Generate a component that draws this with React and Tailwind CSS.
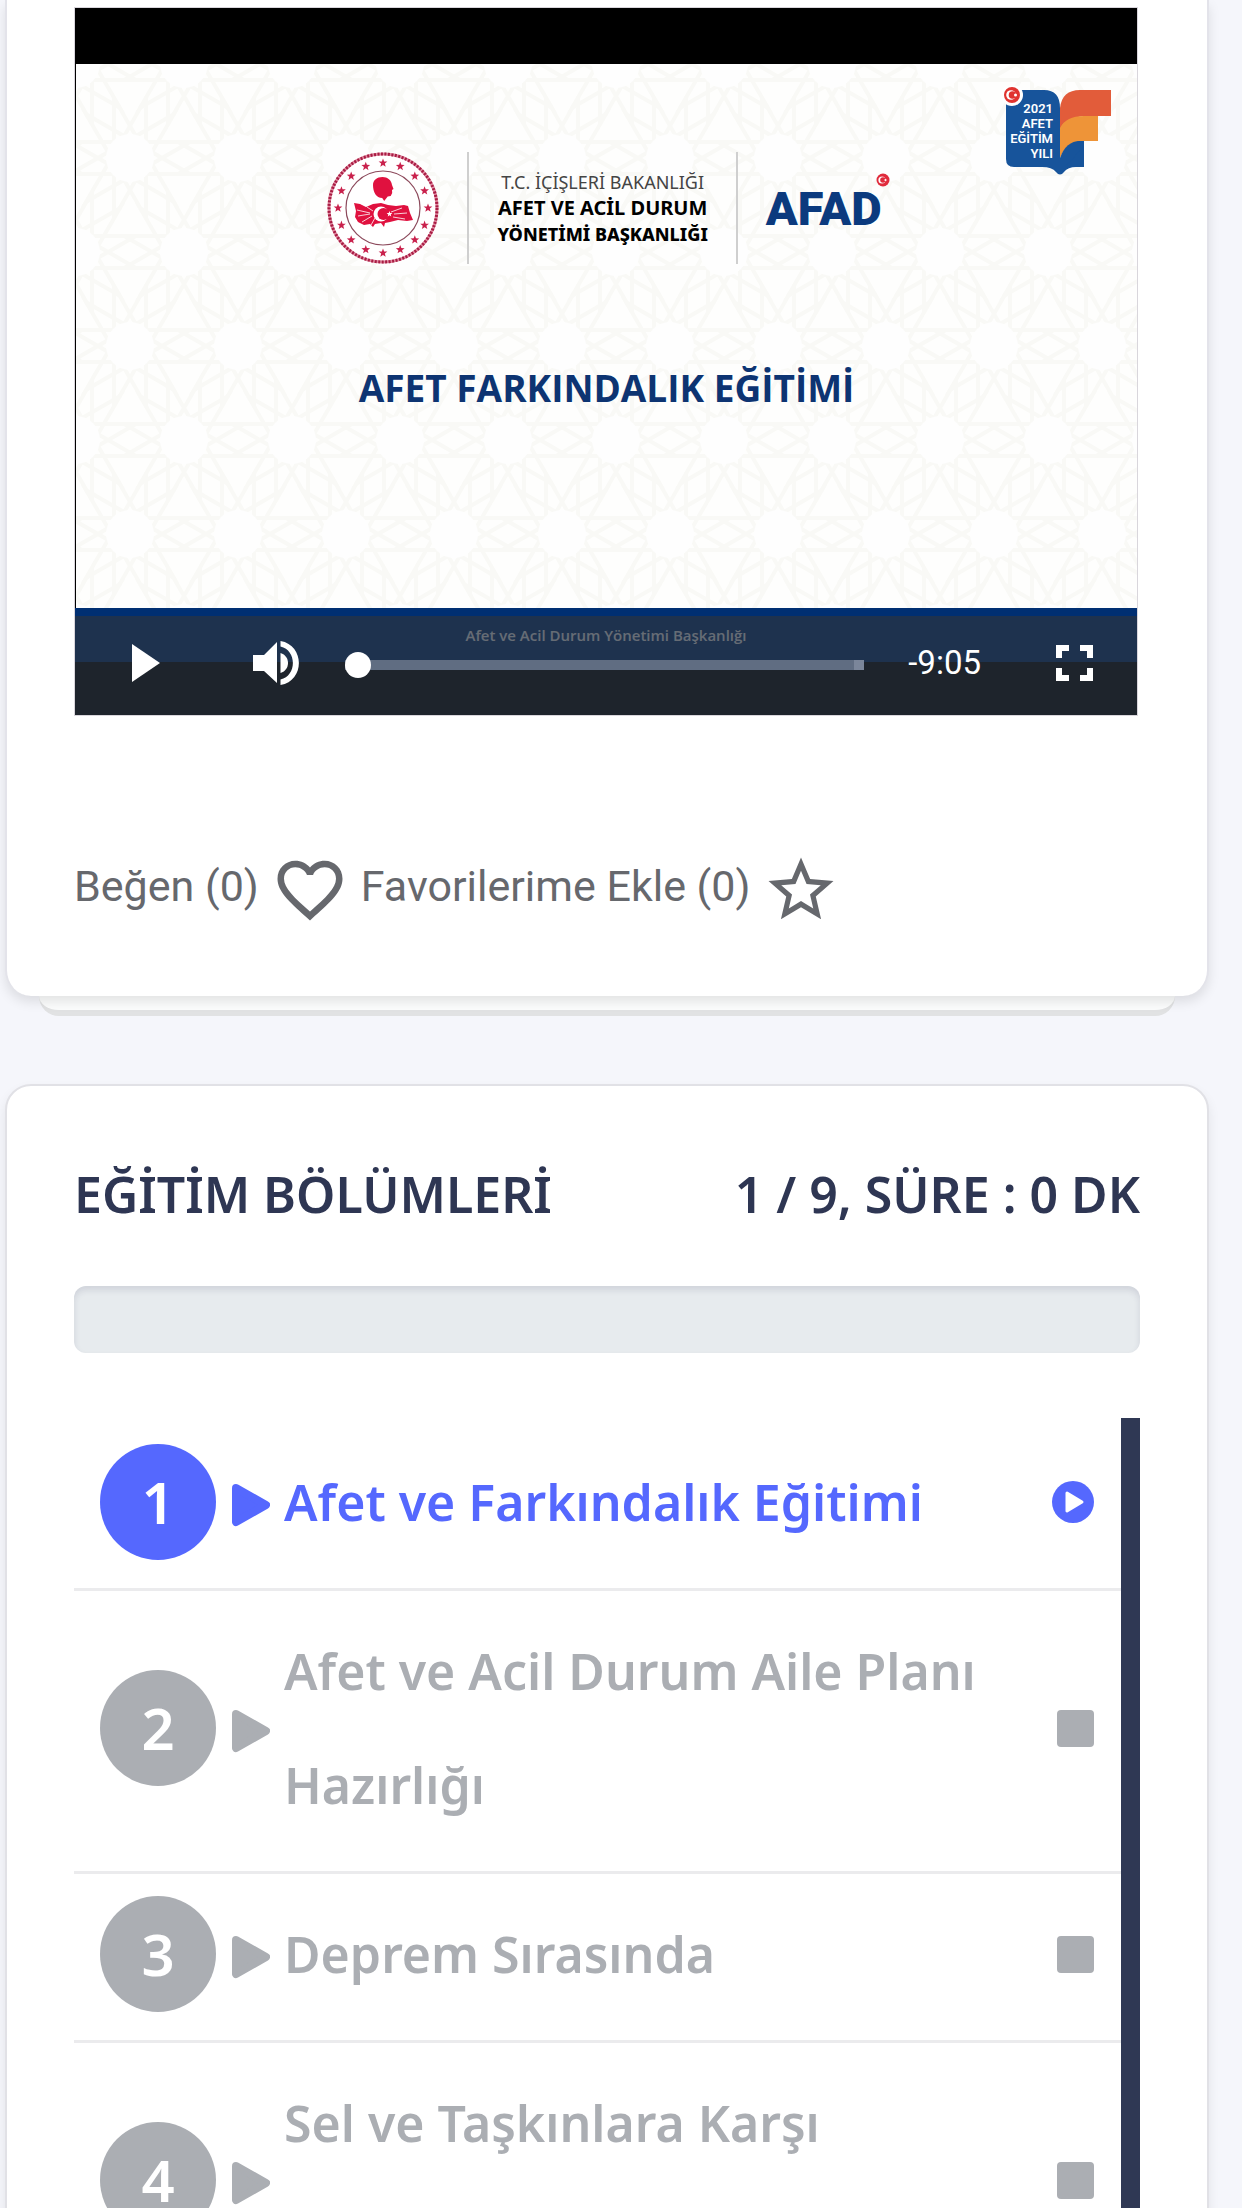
import React, { useState } from "react";
import { MdFavoriteBorder, MdStarBorder } from "react-icons/md";

const lessons = [
  { id: 1, title: "Afet ve Farkındalık Eğitimi" },
  { id: 2, title: "Afet ve Acil Durum Aile Planı Hazırlığı" },
  { id: 3, title: "Deprem Sırasında" },
  { id: 4, title: "Sel ve Taşkınlara Karşı", tall: true },
];

const polar = (cx, cy, r, deg) => {
  const a = ((deg - 90) * Math.PI) / 180;
  return [cx + r * Math.cos(a), cy + r * Math.sin(a)];
};

const starPoints = (cx, cy, r) =>
  Array.from({ length: 10 }, (_, i) => polar(cx, cy, i % 2 ? r * 0.42 : r, i * 36).join(",")).join(" ");

// closed line that joins every fifth corner of a regular twelve sided shape
const rosette = (cx, cy, r) =>
  Array.from({ length: 12 }, (_, i) => polar(cx, cy, r, i * 150 + 15).join(",")).join(" ");

const SlidePattern = () => (
  <svg className="absolute inset-0 w-full h-full" aria-hidden="true">
    <defs>
      <pattern id="girih" width="108" height="188" patternUnits="userSpaceOnUse">
        <g fill="none" stroke="#f9f9f6" strokeWidth="4">
          {[[0, 0], [108, 0], [54, 94], [0, 188], [108, 188], [-54, 94], [162, 94]].map(([x, y]) => (
            <polygon key={x + "-" + y} points={rosette(x, y, 62)} />
          ))}
        </g>
        <g fill="#fefefe">
          {[[0, 0], [108, 0], [54, 94], [0, 188], [108, 188]].map(([x, y]) => (
            <circle key={x + "-" + y} cx={x} cy={y} r="24" />
          ))}
        </g>
      </pattern>
    </defs>
    <rect width="100%" height="100%" fill="url(#girih)" />
  </svg>
);

const Emblem = () => (
  <svg viewBox="0 0 112 112" className="w-28 h-28" role="img" aria-label="İçişleri Bakanlığı">
    <circle cx="56" cy="56" r="55" fill="#fff" />
    <circle cx="56" cy="56" r="54" fill="none" stroke="#e0899f" strokeWidth="3" />
    <circle cx="56" cy="56" r="54" fill="none" stroke="#a81c44" strokeWidth="3" strokeDasharray="2 1.5" />
    <circle cx="56" cy="56" r="37" fill="none" stroke="#8c4a5c" strokeWidth="1.2" />
    {Array.from({ length: 16 }, (_, i) => {
      const [x, y] = polar(56, 56, 45, i * 22.5);
      return <polygon key={i} points={starPoints(x, y, 4.6)} fill="#c9214c" />;
    })}
    <path d="M46 33c0-5 4-8 9.500-8 5 0 9 3 9.500 8l1.500 4-1.500 1 .2 3-1.500 3-3 .5-3.500 4.500-2-3c-6 0-9.200-6-9.200-13z" fill="#e0113f" />
    <path d="M27 51l6 1 6 3 7-3 8-1 7 2 8 1 8-1 4 1 2 7 3 7-6 1-9-1-8 2-5 1-1 4-3-4-6 1-2 3-3-3-6 1-6-3-3-5 1-6z" fill="#e0113f" />
    <path d="M30 58l13 3M31 64l12-2M35 70l10-6M44 73l4-7M40 55l6 4M75 56l-11 4M80 61l-13 1M78 67l-12-2" stroke="#fff" strokeWidth="0.8" />
    <circle cx="54" cy="62" r="7.500" fill="#fff" />
    <circle cx="56.500" cy="62" r="6" fill="#e0113f" />
    <polygon points={starPoints(62.5, 62, 3)} fill="#fff" />
  </svg>
);

const AfadLogo = () => (
  <div className="relative">
    <span className="block font-[Roboto,sans-serif] font-black text-[47px] leading-[47px] text-[#0b3a7e]">AFAD</span>
    <svg viewBox="0 0 14 14" className="absolute -right-2 -top-3 w-3.5 h-3.5" aria-hidden="true">
      <circle cx="7" cy="7" r="6.500" fill="#e02b3c" />
      <circle cx="6" cy="7" r="3.600" fill="#fff" />
      <circle cx="7" cy="7" r="2.800" fill="#e02b3c" />
      <circle cx="9.500" cy="7" r="1.100" fill="#fff" />
    </svg>
  </div>
);

const YearBadge = () => (
  <svg viewBox="0 0 112 92" className="absolute top-[22px] right-[25px] w-28 h-[92px]" role="img" aria-label="2021 Afet Eğitim Yılı">
    <path d="M6 4H44Q60 4 60 22V74L78 54H84V81H76Q68 81 64 86Q60 91 56 86Q52 81 42 81H14Q6 81 6 73Z" fill="#17549b" />
    <path d="M60 22Q62 4 80 4H111V30H84Q64 32 60 44Z" fill="#e25c3a" />
    <path d="M60 42Q66 30 84 30H98V55H80Q66 57 60 72Z" fill="#ee9438" />
    <path d="M60 72Q66 55 80 55H84V60L66 80H60Z" fill="#17549b" />
    <circle cx="12" cy="9" r="11" fill="#fff" />
    <circle cx="12" cy="9" r="8" fill="#e0332f" />
    <circle cx="11" cy="9" r="4.800" fill="#fff" />
    <circle cx="12.500" cy="9" r="3.800" fill="#e0332f" />
    <circle cx="15.500" cy="9" r="1.500" fill="#fff" />
    <g fill="#fff" textAnchor="end" fontFamily="Roboto, sans-serif" fontWeight="600" fontSize="13">
      <text x="53" y="27">2021</text>
      <text x="53" y="42">AFET</text>
      <text x="53" y="57">EĞİTİM</text>
      <text x="53" y="72">YILI</text>
    </g>
  </svg>
);

const PlayIcon = () => (
  <svg viewBox="0 0 28 38" className="w-7 h-[38px]" fill="#fff">
    <path d="M0 0L28 19L0 38Z" />
  </svg>
);

const VolumeIcon = () => (
  <svg viewBox="0 0 46 46" className="w-[46px] h-[46px]" fill="#fff">
    <path d="M0 15H11L24 2V43L11 31H0Z" />
    <path d="M27.500 13C37.500 16 37.500 30 27.500 33Z" />
    <path d="M27.500 1C52 5 52 41 27.500 45V39.500C44 36 44 10 27.500 6.500Z" />
  </svg>
);

const FullscreenIcon = () => (
  <svg viewBox="0 0 37 36" className="w-[37px] h-9" fill="none" stroke="#fff" strokeWidth="6">
    <path d="M3 13V3H13M24 3H34V13M34 23V33H24M13 33H3V23" />
  </svg>
);

const TriangleIcon = () => (
  <svg viewBox="0 0 38 44" className="w-[38px] h-11 shrink-0" fill="currentColor" stroke="currentColor" strokeWidth="8" strokeLinejoin="round" aria-hidden="true">
    <path d="M4 5L34 22L4 39Z" />
  </svg>
);

const PlayCircleIcon = () => (
  <svg viewBox="0 0 42 42" className="w-[42px] h-[42px] shrink-0" aria-hidden="true">
    <circle cx="21" cy="21" r="21" fill="currentColor" />
    <path d="M15 12L30 21L15 30Z" fill="#fff" stroke="#fff" strokeWidth="3" strokeLinejoin="round" />
  </svg>
);

const VideoPlayer = () => {
  const [time, setTime] = useState(0);

  return (
    <div className="relative mr-0.5 border border-[#d9d6dc] bg-black pt-14 pb-[53px]">
      <div className="relative h-[544px] bg-[#fefefd] ml-px pt-[88px] overflow-hidden">
        <SlidePattern />
        <div className="relative flex justify-center gap-7 pr-1">
          <Emblem />
          <div className="w-0.5 bg-[#cfcfcf]" />
          <div className="flex flex-col justify-center items-center font-['Noto_Sans',sans-serif] leading-[26px] whitespace-nowrap text-black">
            <span className="text-[18px] text-[#444]">T.C. İÇİŞLERİ BAKANLIĞI</span>
            <span className="text-[20px] font-bold">AFET VE ACİL DURUM</span>
            <span className="text-[18px] font-extrabold">YÖNETİMİ BAŞKANLIĞI</span>
          </div>
          <div className="w-0.5 bg-[#cfcfcf]" />
          <div className="flex items-center">
            <AfadLogo />
          </div>
        </div>
        <h2 className="relative mt-[100px] text-center font-['Open_Sans',sans-serif] font-bold text-[37px] leading-12 text-[#0d3472]">
          AFET FARKINDALIK EĞİTİMİ
        </h2>
        <YearBadge />
      </div>
      <div className="h-[54px] bg-[#002f72] flex items-center justify-center font-['Open_Sans',sans-serif] font-semibold text-[15px] text-[#f0f2f4]">
        Afet ve Acil Durum Yönetimi Başkanlığı
      </div>

      <div className="absolute inset-x-0 bottom-0 h-[99px] bg-[#2b333f]/70 flex items-center pl-[57px] pr-11 pb-1.5">
        <button aria-label="Oynat">
          <PlayIcon />
        </button>
        <button aria-label="Ses" className="ml-[93px]">
          <VolumeIcon />
        </button>
        <input
          type="range"
          aria-label="İlerleme"
          min="0"
          max="545"
          value={time}
          onChange={(e) => setTime(Number(e.target.value))}
          className="appearance-none flex-1 min-w-0 h-2.5 mt-1 ml-[46px] bg-transparent bg-linear-to-r from-[#606d82] from-98% to-[#7b869a] to-98% bg-no-repeat [&::-webkit-slider-thumb]:appearance-none [&::-webkit-slider-thumb]:w-[26px] [&::-webkit-slider-thumb]:h-[26px] [&::-webkit-slider-thumb]:rounded-full [&::-webkit-slider-thumb]:bg-white"
        />
        <span className="ml-11 font-[Roboto,sans-serif] text-[33px] text-white">-9:05</span>
        <button aria-label="Tam ekran" className="ml-[75px]">
          <FullscreenIcon />
        </button>
      </div>
    </div>
  );
};

const LessonRow = ({ lesson, active, onSelect }) => (
  <li className="border-b-3 border-[#ebebed]">
    <button
      onClick={() => onSelect(lesson.id)}
      className={`w-full flex items-center text-left pt-[23px] pb-[29px] pl-[26px] pr-[27px] ${active ? "text-[#5568fe]" : "text-[#abaeb3]"}`}
    >
      <span className="w-[116px] h-[116px] -my-px shrink-0 rounded-full bg-current flex items-center justify-center">
        <span className="text-white text-[58px] leading-[58px] font-semibold">{lesson.id}</span>
      </span>
      <span className="ml-4 mt-1.5">
        <TriangleIcon />
      </span>
      <span className={`ml-3.5 mr-8 flex-1 text-[50px] leading-[114px] font-semibold ${lesson.tall ? "min-h-[228px]" : ""}`}>
        {lesson.title}
      </span>
      {active ? <PlayCircleIcon /> : <span className="w-[37px] h-[37px] shrink-0 rounded-[4px] bg-current" />}
    </button>
  </li>
);

const App = () => {
  const [current, setCurrent] = useState(1);

  return (
    <div className="h-screen overflow-hidden bg-[#f5f6fb] pl-[5px] pr-[33px]">
      <div className="relative z-10 bg-white border-x-2 border-[#e3e3ea] rounded-b-[26px] shadow-[0_6px_12px_rgba(0,0,0,0.1)] px-[67px] pt-[7px] pb-[67px]">
        <VideoPlayer />
        <div className="flex items-start gap-3 mt-[135px] font-[Roboto,sans-serif] text-[43px] leading-[70px] text-[#66686d]">
          <button className="flex items-start gap-3">
            Beğen (0)
            <MdFavoriteBorder size={78} />
          </button>
          <button className="flex items-start gap-3">
            Favorilerime Ekle (0)
            <MdStarBorder size={78} />
          </button>
        </div>
      </div>
      <div className="mx-[34px] h-5 bg-[#fcfdfd] border-b-6 border-[#e1e2e3] rounded-b-[20px]" />

      <div className="mt-[68px] bg-white border-2 border-[#e1e1e6] rounded-[26px] shadow-[0_6px_12px_rgba(0,0,0,0.08)] px-[67px] pb-16 font-['Noto_Sans',sans-serif]">
        <div className="flex justify-between pt-[76px] text-[50px] leading-16 font-semibold text-[#2e3653] whitespace-nowrap">
          <h3>EĞİTİM BÖLÜMLERİ</h3>
          <span>1 / 9, SÜRE : 0 DK</span>
        </div>
        <div
          role="progressbar"
          aria-label="Eğitim ilerlemesi"
          aria-valuenow={0}
          className="mt-[60px] h-[67px] rounded-[12px] bg-[#e7ebee] shadow-[inset_0_4px_6px_rgba(40,40,80,0.12)]"
        />
        <ul className="mt-[65px] pt-1 border-r-19 border-[#2f3854]">
          {lessons.map((lesson) => (
            <LessonRow key={lesson.id} lesson={lesson} active={lesson.id === current} onSelect={setCurrent} />
          ))}
        </ul>
      </div>
    </div>
  );
};

export default App;
